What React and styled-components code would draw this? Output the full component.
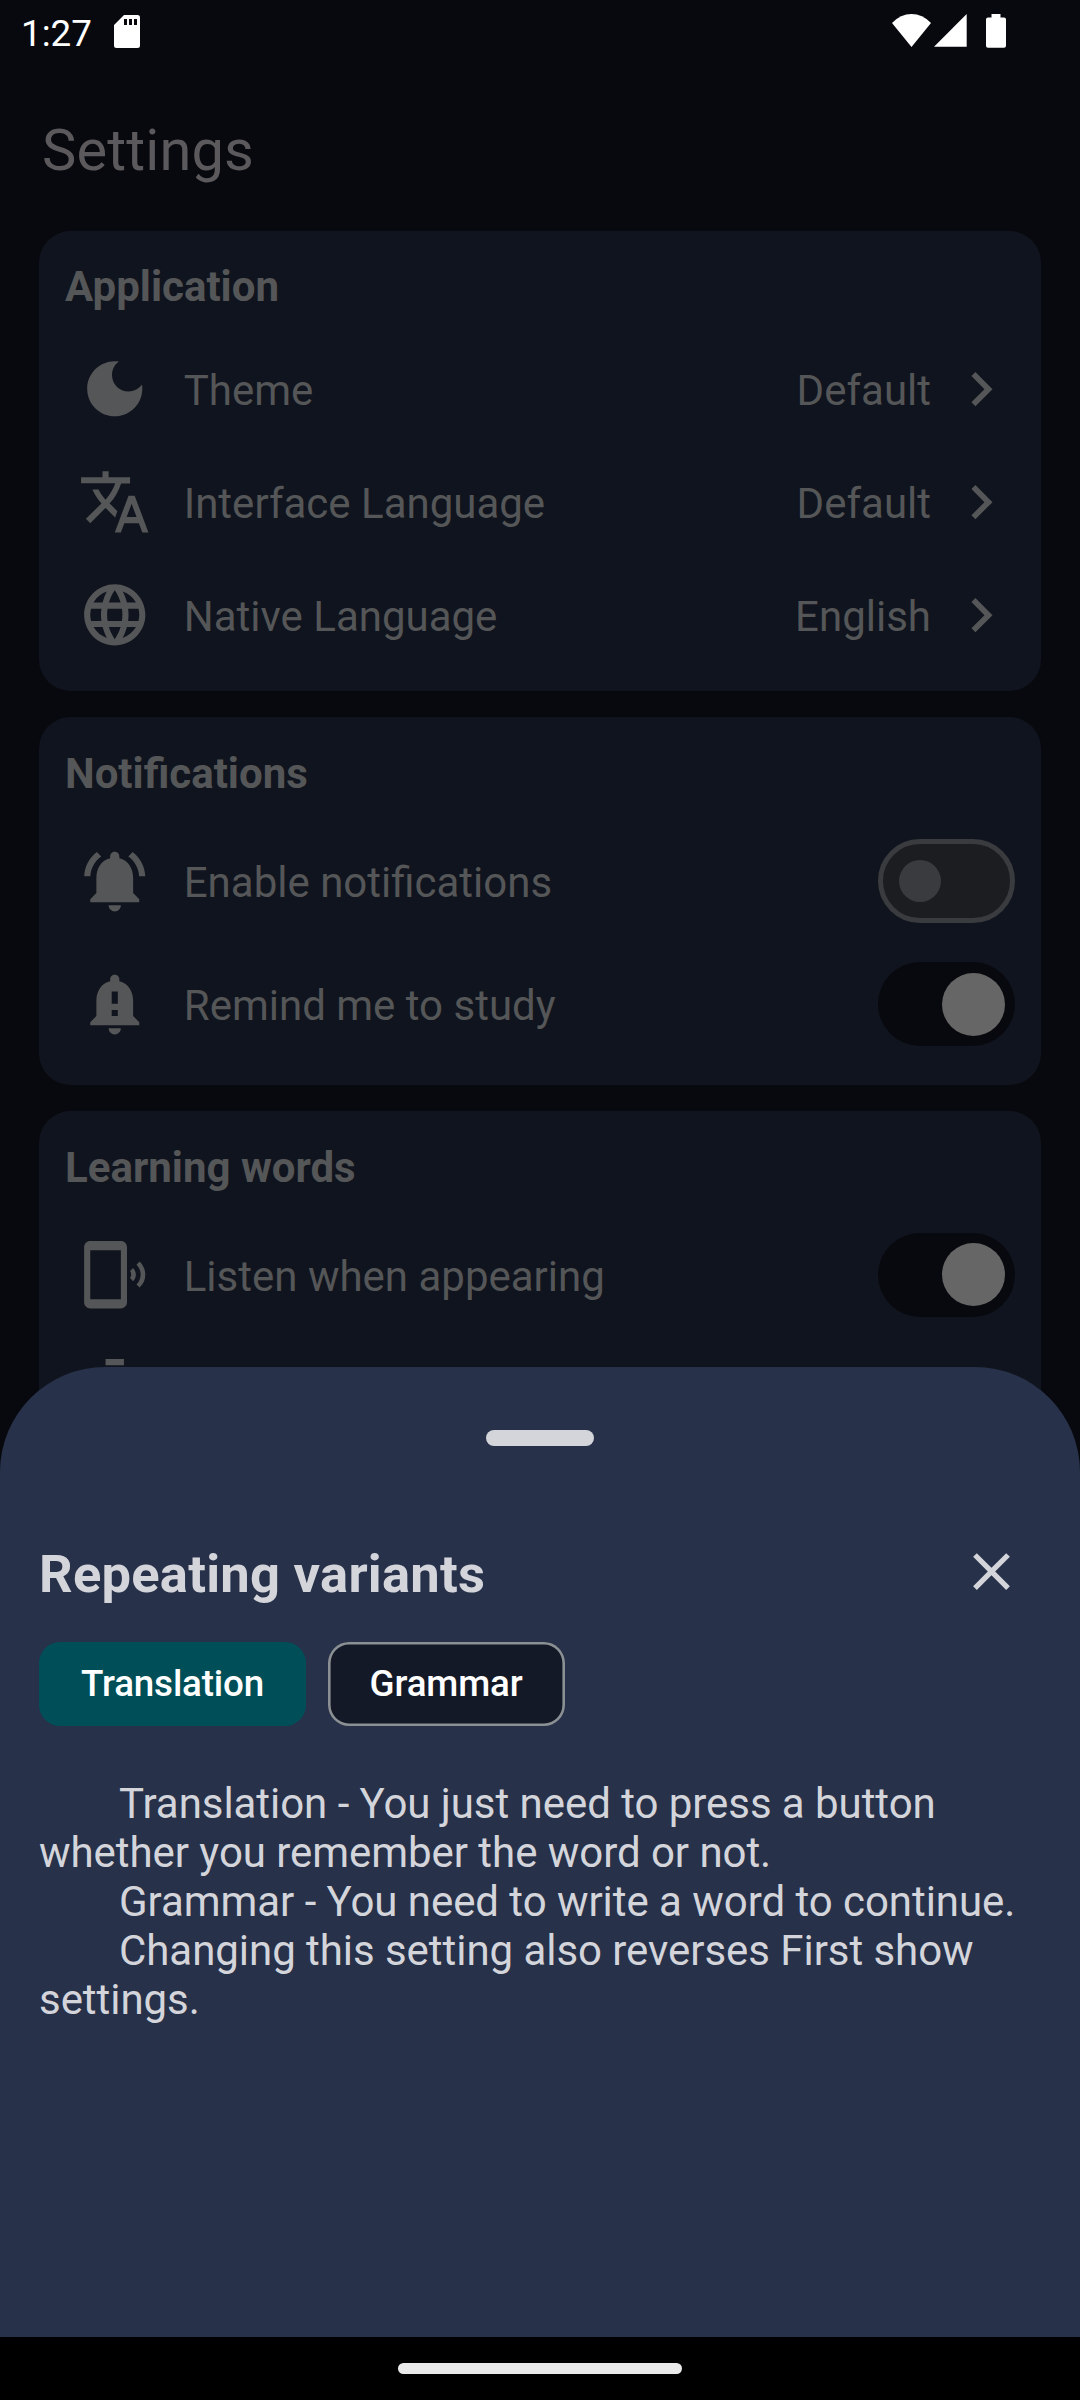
import React from "react";
import styled, { createGlobalStyle } from "styled-components";

const GlobalStyle = createGlobalStyle`
  *, *::before, *::after { box-sizing: border-box; }
  body {
    margin: 0;
    background: #08090e;
    font-family: Roboto, "Liberation Sans", sans-serif;
  }
`;

const colors = {
  page: "#08090e",
  card: "#10141e",
  dimText: "#555657",
  sheet: "#27314a",
  sheetText: "#d4d5db",
};

const Screen = styled.div`
  position: relative;
  display: flex;
  flex-direction: column;
  width: 1080px;
  height: 2400px;
  overflow: hidden;
  background: ${colors.page};
`;

const StatusBar = styled.header`
  display: flex;
  justify-content: space-between;
  height: 66px;
  padding: 12px 74px 0 21px;
  color: #fff;
`;

const StatusGroup = styled.div`
  display: flex;
  align-items: flex-start;
`;

const Clock = styled.span`
  width: 93px;
  font-size: 36.75px;
  line-height: 43px;
`;

const StatusIcon = styled.svg`
  display: block;
  width: ${(p) => p.$width}px;
  height: 34px;
  margin: ${(p) => p.$top ?? 2}px 0 0 ${(p) => p.$left ?? 0}px;
  fill: currentColor;
`;

const PageTitle = styled.h1`
  flex: none;
  height: 68px;
  margin: 50px 0 46.6px 42px;
  color: #5b595b;
  font-size: 57.75px;
  font-weight: 400;
  letter-spacing: 0.15px;
  line-height: 68px;
`;

const Sections = styled.main`
  display: flex;
  flex: none;
  flex-direction: column;
  gap: 26.25px;
  padding: 0 39px;
`;

const Card = styled.section`
  padding: 31.75px 26px 19.2px;
  border-radius: 31.5px;
  background: ${colors.card};
  color: ${colors.dimText};
`;

const CardHeading = styled.h2`
  margin: 0 0 21.55px;
  font-size: 42px;
  font-weight: 700;
  line-height: 49px;
`;

const Row = styled.div`
  display: flex;
  align-items: center;
  height: ${(p) => (p.$tall ? 123 : 113)}px;
  padding-left: 13px;
  font-size: 42px;
  line-height: 49px;
`;

const RowIcon = styled.svg`
  flex: none;
  width: 73.5px;
  height: 73.5px;
  margin: 0 32.25px 0.7px 0;
  fill: currentColor;
`;

const RowLabel = styled.span`
  flex: 1;
  padding-top: 3px;
`;

const RowValue = styled.span`
  padding-top: 3px;
`;

const Chevron = styled.svg`
  width: 68.25px;
  height: 68.25px;
  margin-left: 15.75px;
  fill: currentColor;
`;

const Track = styled.span`
  display: flex;
  align-items: center;
  justify-content: ${(p) => (p.$on ? "flex-end" : "flex-start")};
  width: 137px;
  height: 84px;
  padding: ${(p) => (p.$on ? "0 10.5px" : "0 15.75px")};
  border: ${(p) => (p.$on ? "0" : "5.25px solid #3a3b3e")};
  border-radius: 42px;
  background: ${(p) => (p.$on ? colors.page : "#1c1d20")};
`;

const Thumb = styled.span`
  width: ${(p) => (p.$on ? 63 : 42)}px;
  height: ${(p) => (p.$on ? 63 : 42)}px;
  border-radius: 50%;
  background: ${(p) => (p.$on ? "#666" : "#3a3b3e")};
`;

const Sheet = styled.aside`
  position: absolute;
  top: 1367px;
  left: 0;
  display: flex;
  flex-direction: column;
  width: 1080px;
  height: 970px;
  padding: 63px 39px 0;
  border-radius: 105px 105px 0 0;
  background: ${colors.sheet};
  color: ${colors.sheetText};
`;

const DragHandle = styled.div`
  align-self: center;
  width: 108px;
  height: 16px;
  border-radius: 8px;
  background: ${colors.sheetText};
`;

const SheetHeader = styled.div`
  display: flex;
  align-items: center;
  justify-content: space-between;
  height: 62px;
  margin-top: 95px;
  padding-right: 18px;
`;

const SheetTitle = styled.h2`
  margin: 3px 0 0;
  font-size: 52.5px;
  font-weight: 700;
  letter-spacing: 0.25px;
  line-height: 62px;
`;

const CloseIcon = styled.svg`
  width: 63px;
  height: 63px;
  margin-bottom: 1px;
  fill: currentColor;
`;

const Choices = styled.div`
  display: flex;
  gap: 21.5px;
  margin-top: 39px;
`;

const Choice = styled.button`
  height: 84px;
  padding: 0 42px 2px;
  border: 0;
  border-radius: 21px;
  background: ${(p) => (p.$selected ? "#004f58" : "#141927")};
  box-shadow: ${(p) => (p.$selected ? "none" : "inset 0 0 0 2.6px #8b9094")};
  color: #fff;
  font-family: inherit;
  font-size: 36.75px;
  font-weight: 500;
  letter-spacing: -0.15px;
`;

const Description = styled.div`
  margin-top: 53px;
  font-size: 42px;
  letter-spacing: -0.05px;
  line-height: 49px;

  p {
    margin: 0;
    text-indent: 80px;
  }
`;

const NavigationBar = styled.footer`
  position: absolute;
  bottom: 0;
  left: 0;
  display: flex;
  justify-content: center;
  width: 1080px;
  height: 63px;
  padding-top: 26px;
  background: #000;
`;

const HomePill = styled.div`
  width: 284px;
  height: 10.5px;
  border-radius: 6px;
  background: #eaeaea;
`;

const icons = {
  moon: "M12 3c-4.97 0-9 4.03-9 9s4.03 9 9 9 9-4.03 9-9c0-.46-.04-.92-.1-1.36-.98 1.37-2.58 2.26-4.4 2.26-2.98 0-5.4-2.42-5.4-5.4 0-1.81.89-3.42 2.26-4.4C12.92 3.04 12.46 3 12 3z",
  translate:
    "M12.87 15.07l-2.54-2.51.03-.03c1.74-1.94 2.98-4.17 3.71-6.53H17V4h-7V2H8v2H1v1.99h11.17C11.5 7.92 10.44 9.75 9 11.35 8.07 10.32 7.3 9.19 6.69 8h-2c.73 1.63 1.73 3.17 2.98 4.56l-5.09 5.02L4 19l5-5 3.11 3.11.76-2.04zM18.5 10h-2L12 22h2l1.12-3h4.75L21 22h2l-4.5-12zm-2.62 7l1.62-4.33L19.12 17h-3.24z",
  globe:
    "M11.99 2C6.47 2 2 6.48 2 12s4.47 10 9.99 10C17.52 22 22 17.52 22 12S17.52 2 11.99 2zm6.93 6h-2.95c-.32-1.25-.78-2.45-1.38-3.56 1.84.63 3.37 1.91 4.33 3.56zM12 4.04c.83 1.2 1.48 2.53 1.91 3.96h-3.82c.43-1.43 1.08-2.76 1.91-3.96zM4.26 14C4.1 13.36 4 12.69 4 12s.1-1.36.26-2h3.38c-.08.66-.14 1.32-.14 2s.06 1.34.14 2H4.26zm.82 2h2.95c.32 1.25.78 2.45 1.38 3.56-1.84-.63-3.37-1.9-4.33-3.56zm2.95-8H5.08c.96-1.66 2.49-2.93 4.33-3.56C8.81 5.55 8.35 6.75 8.03 8zM12 19.96c-.83-1.2-1.48-2.53-1.91-3.96h3.82c-.43 1.43-1.08 2.76-1.91 3.96zM14.34 14H9.66c-.09-.66-.16-1.32-.16-2s.07-1.35.16-2h4.68c.09.65.16 1.32.16 2s-.07 1.34-.16 2zm.25 5.56c.6-1.11 1.06-2.31 1.38-3.56h2.95c-.96 1.65-2.49 2.93-4.33 3.56zM16.36 14c.08-.66.14-1.32.14-2s-.06-1.34-.14-2h3.38c.16.64.26 1.31.26 2s-.1 1.36-.26 2h-3.38z",
  bellActive:
    "M7.58 4.08L6.15 2.65C3.75 4.48 2.17 7.3 2.03 10.5h2c.15-2.65 1.51-4.97 3.55-6.42zm12.39 6.42h2c-.15-3.2-1.73-6.02-4.12-7.85l-1.42 1.43c2.02 1.45 3.39 3.77 3.54 6.42zM18 11c0-3.07-1.64-5.64-4.5-6.32V4c0-.83-.67-1.5-1.5-1.5s-1.5.67-1.5 1.5v.68C7.63 5.36 6 7.92 6 11v5l-2 2v1h16v-1l-2-2v-5zm-6 11c.14 0 .27-.01.4-.04.65-.14 1.18-.58 1.44-1.18.1-.24.15-.5.15-.78h-4c.01 1.1.9 2 2.01 2z",
  bellAlert:
    "M18 16v-5c0-3.07-1.64-5.64-4.5-6.32V4c0-.83-.67-1.5-1.5-1.5s-1.5.67-1.5 1.5v.68C7.63 5.36 6 7.92 6 11v5l-2 2v1h16v-1l-2-2zm-5 0h-2v-2h2v2zm0-4h-2V8h2v4zm-1 10c1.1 0 2-.9 2-2h-4c0 1.1.89 2 2 2z",
  phoneRing:
    "M20.1 7.7l-1 1c1.8 1.8 1.8 4.6 0 6.5l1 1c2.5-2.3 2.5-6.1 0-8.5zM18 9.8l-1 1c.5.7.5 1.6 0 2.3l1 1c1.2-1.2 1.2-3 0-4.3zM14 1H4c-1.1 0-2 .9-2 2v18c0 1.1.9 2 2 2h10c1.1 0 2-.9 2-2V3c0-1.1-.9-2-2-2zm0 19H4V4h10v16z",
  timer:
    "M15 1H9v2h6V1zm-4 13h2V8h-2v6zm8.03-6.61l1.42-1.42c-.43-.51-.9-.99-1.41-1.41l-1.42 1.42C16.07 4.74 14.12 4 12 4c-4.97 0-9 4.03-9 9s4.02 9 9 9 9-4.03 9-9c0-2.12-.74-4.07-1.97-5.61zM12 20c-3.87 0-7-3.13-7-7s3.13-7 7-7 7 3.13 7 7-3.13 7-7 7z",
};

const sections = [
  {
    title: "Application",
    rows: [
      { icon: "moon", label: "Theme", value: "Default" },
      { icon: "translate", label: "Interface Language", value: "Default" },
      { icon: "globe", label: "Native Language", value: "English" },
    ],
  },
  {
    title: "Notifications",
    rows: [
      { icon: "bellActive", label: "Enable notifications", on: false },
      { icon: "bellAlert", label: "Remind me to study", on: true },
    ],
  },
  {
    title: "Learning words",
    rows: [
      { icon: "phoneRing", label: "Listen when appearing", on: true },
      { icon: "timer" },
    ],
  },
];

function Switch({ on }) {
  return (
    <Track $on={on} role="switch" aria-checked={on}>
      <Thumb $on={on} />
    </Track>
  );
}

function SettingRow({ icon, label, value, on }) {
  return (
    <Row $tall={on !== undefined}>
      <RowIcon viewBox="0 0 24 24">
        <path d={icons[icon]} />
      </RowIcon>
      {label && <RowLabel>{label}</RowLabel>}
      {value && (
        <>
          <RowValue>{value}</RowValue>
          <Chevron viewBox="0 0 24 24">
            <path d="M10 6L8.59 7.41 13.17 12l-4.58 4.59L10 18l6-6z" />
          </Chevron>
        </>
      )}
      {on !== undefined && <Switch on={on} />}
    </Row>
  );
}

export default function App() {
  return (
    <Screen>
      <GlobalStyle />
      <StatusBar>
        <StatusGroup>
          <Clock>1:27</Clock>
          <StatusIcon $width={26} $top={3} viewBox="0 0 26 34">
            <path
              fillRule="evenodd"
              d="M10 0H23.500Q26 0 26 2.500V30.500Q26 33 23.500 33H2.500Q0 33 0 30.500V10ZM10 4V10H13V4ZM15 4V10H18V4ZM20 4V10H23V4Z"
            />
          </StatusIcon>
        </StatusGroup>
        <StatusGroup>
          <StatusIcon $width={39} viewBox="0 0 39 34">
            <path d="M0 9Q8.500 0 19.500 0T39 9L19.500 33Z" />
          </StatusIcon>
          <StatusIcon $width={33} $left={3} viewBox="0 0 33 34">
            <path d="M32.700 0V32.700H0Z" />
          </StatusIcon>
          <StatusIcon $width={20} $left={19} viewBox="0 0 20 34">
            <path d="M5.500 0H14.500V3.500H18Q20 3.500 20 5.500V31.700Q20 33.700 18 33.700H2Q0 33.700 0 31.700V5.500Q0 3.500 2 3.500H5.500Z" />
          </StatusIcon>
        </StatusGroup>
      </StatusBar>

      <PageTitle>Settings</PageTitle>

      <Sections>
        {sections.map((section) => (
          <Card key={section.title}>
            <CardHeading>{section.title}</CardHeading>
            {section.rows.map((row) => (
              <SettingRow key={row.icon} {...row} />
            ))}
          </Card>
        ))}
      </Sections>

      <Sheet>
        <DragHandle />
        <SheetHeader>
          <SheetTitle>Repeating variants</SheetTitle>
          <CloseIcon viewBox="0 0 24 24" aria-label="Close">
            <path d="M19 6.410L17.590 5 12 10.590 6.410 5 5 6.410 10.590 12 5 17.590 6.410 19 12 13.410 17.590 19 19 17.590 13.410 12z" />
          </CloseIcon>
        </SheetHeader>
        <Choices>
          <Choice $selected>Translation</Choice>
          <Choice>Grammar</Choice>
        </Choices>
        <Description>
          <p>Translation - You just need to press a button whether you remember the word or not.</p>
          <p>Grammar - You need to write a word to continue.</p>
          <p>Changing this setting also reverses First show settings.</p>
        </Description>
      </Sheet>

      <NavigationBar>
        <HomePill />
      </NavigationBar>
    </Screen>
  );
}
